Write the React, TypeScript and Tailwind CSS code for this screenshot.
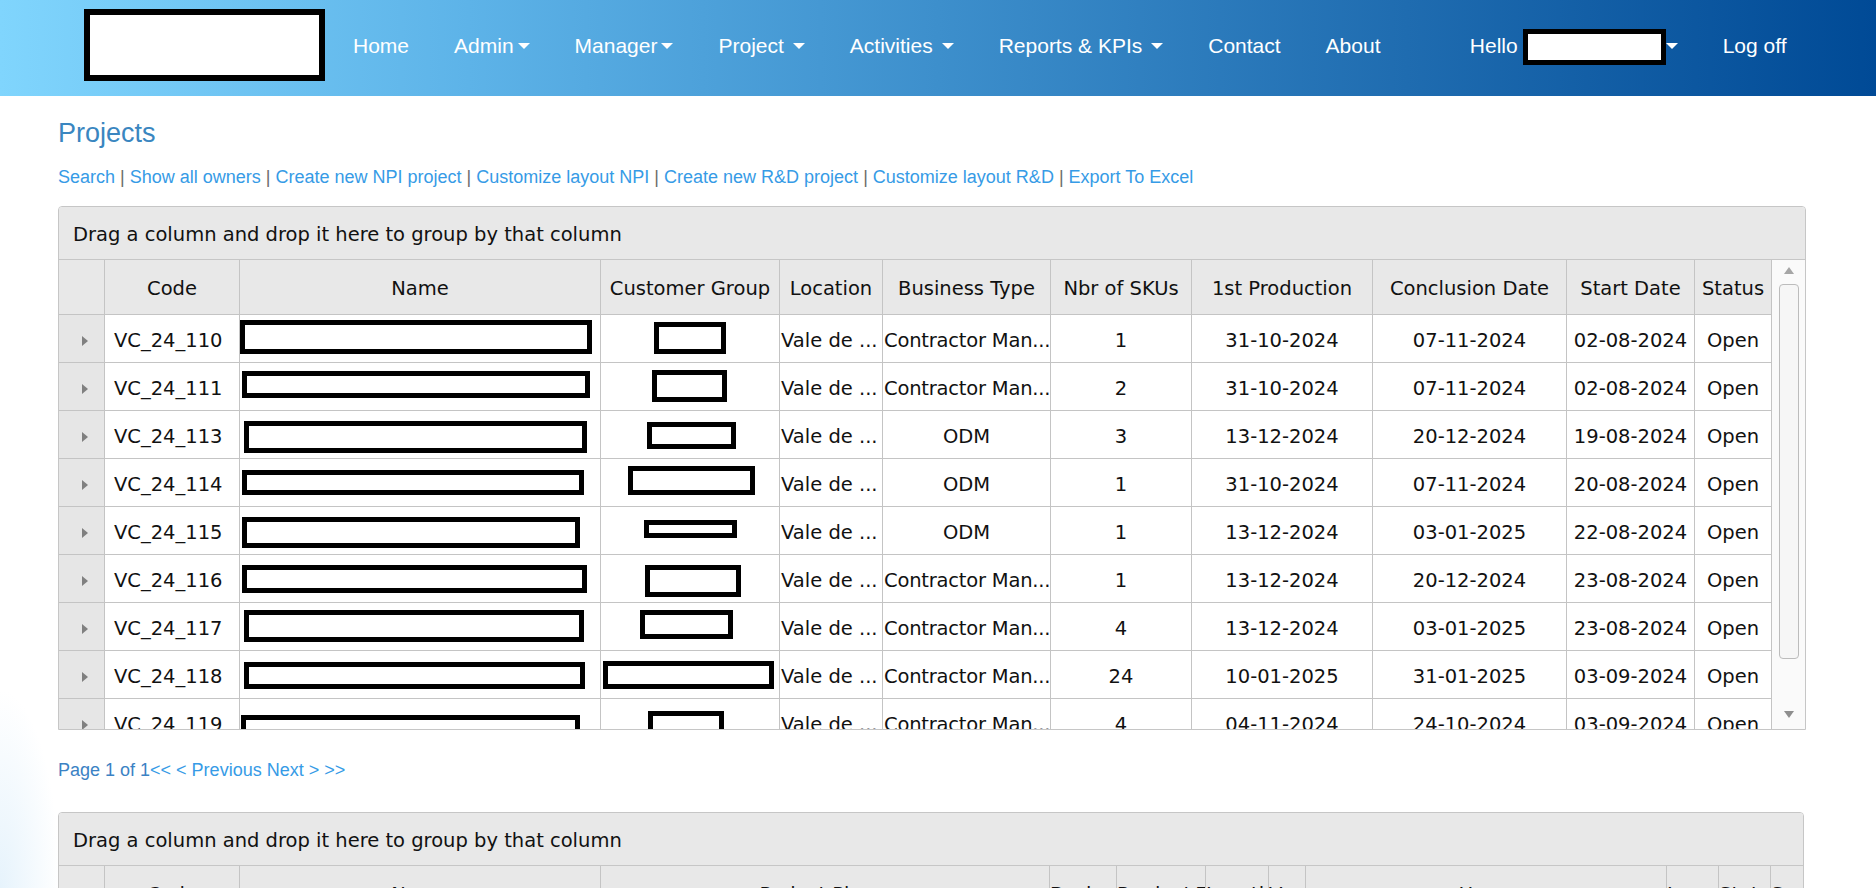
import React from "react";

type Box = { ml: number; mt: number; w: number; h: number };
type Row = {
  code: string;
  bt: "C" | "O";
  n: string;
  p: string;
  c: string;
  s: string;
  nb: Box;
  cb: Box;
};

const rows: Row[] = [
  { code: "VC_24_110", bt: "C", n: "1", p: "31-10-2024", c: "07-11-2024", s: "02-08-2024", nb: { ml: 0, mt: 5, w: 352, h: 34 }, cb: { ml: 53, mt: 7, w: 72, h: 32 } },
  { code: "VC_24_111", bt: "C", n: "2", p: "31-10-2024", c: "07-11-2024", s: "02-08-2024", nb: { ml: 2, mt: 8, w: 348, h: 27 }, cb: { ml: 51, mt: 7, w: 75, h: 32 } },
  { code: "VC_24_113", bt: "O", n: "3", p: "13-12-2024", c: "20-12-2024", s: "19-08-2024", nb: { ml: 4, mt: 10, w: 343, h: 32 }, cb: { ml: 46, mt: 11, w: 89, h: 27 } },
  { code: "VC_24_114", bt: "O", n: "1", p: "31-10-2024", c: "07-11-2024", s: "20-08-2024", nb: { ml: 2, mt: 11, w: 342, h: 25 }, cb: { ml: 27, mt: 7, w: 127, h: 29 } },
  { code: "VC_24_115", bt: "O", n: "1", p: "13-12-2024", c: "03-01-2025", s: "22-08-2024", nb: { ml: 2, mt: 10, w: 338, h: 31 }, cb: { ml: 43, mt: 13, w: 93, h: 18 } },
  { code: "VC_24_116", bt: "C", n: "1", p: "13-12-2024", c: "20-12-2024", s: "23-08-2024", nb: { ml: 2, mt: 10, w: 345, h: 28 }, cb: { ml: 44, mt: 10, w: 96, h: 32 } },
  { code: "VC_24_117", bt: "C", n: "4", p: "13-12-2024", c: "03-01-2025", s: "23-08-2024", nb: { ml: 4, mt: 7, w: 340, h: 32 }, cb: { ml: 39, mt: 7, w: 93, h: 29 } },
  { code: "VC_24_118", bt: "C", n: "24", p: "10-01-2025", c: "31-01-2025", s: "03-09-2024", nb: { ml: 4, mt: 11, w: 341, h: 27 }, cb: { ml: 2, mt: 10, w: 171, h: 28 } },
  { code: "VC_24_119", bt: "C", n: "4", p: "04-11-2024", c: "24-10-2024", s: "03-09-2024", nb: { ml: 1, mt: 16, w: 339, h: 30 }, cb: { ml: 47, mt: 12, w: 76, h: 30 } },
];

const heads1 = ["Code", "Name", "Customer Group", "Location", "Business Type", "Nbr of SKUs", "1st Production", "Conclusion Date", "Start Date", "Status"];
const heads2 = ["Code", "Name", "Project Phase", "Business Type", "Product Type", "Location", "Version", "Users", "Issues", "Status", "Sample"];

const links = [
  "Search",
  "Show all owners",
  "Create new NPI project",
  "Customize layout NPI",
  "Create new R&D project",
  "Customize layout R&D",
  "Export To Excel",
];

const cell = "h-[48px] border-r border-b border-[#c4c4c4] overflow-hidden whitespace-nowrap";
const txt = "flex items-center justify-center pt-[4px]";

function Caret({ gap }: { gap?: boolean }) {
  return (
    <span
      className={
        "inline-block w-0 h-0 border-t-[6px] border-x-[6px] border-x-transparent border-t-white align-middle " +
        (gap ? "ml-[9px]" : "ml-[4px]")
      }
    />
  );
}

function NavItem({ label, caret, gap }: { label: string; caret?: boolean; gap?: boolean }) {
  return (
    <li className="px-[22.5px] h-full flex items-center pb-[4px] whitespace-nowrap">
      <span>{label}</span>
      {caret && <Caret gap={gap} />}
    </li>
  );
}

function GroupPanel() {
  return (
    <div className="h-[53px] bg-[#e8e8e8] border-b border-[#c6c6c6] flex items-center pl-[14px] pt-[3px] text-[19.5px] text-[#111]">
      Drag a column and drop it here to group by that column
    </div>
  );
}

function Expander() {
  return (
    <div className={cell + " bg-[#e6e6e6] " + txt}>
      <span className="ml-[6px] w-0 h-0 border-l-[6px] border-l-[#808080] border-y-[5px] border-y-transparent" />
    </div>
  );
}

export default function App() {
  return (
    <div className="w-[1876px] min-h-screen bg-white font-['Liberation_Sans',Arial,sans-serif]">
      <nav className="h-[96px] bg-[linear-gradient(90deg,#80d5fd_0%,#5db3e8_25%,#3d8fcc_50%,#1f6cb0_75%,#004a96_100%)] flex pl-[84px] pr-[67px] text-white text-[21px]">
        <div className="mt-[9px] w-[241px] h-[72px] border-[6px] border-black bg-white shrink-0" />
        <ul className="ml-[5.5px] flex h-full">
          <NavItem label="Home" />
          <NavItem label="Admin" caret />
          <NavItem label="Manager" caret />
          <NavItem label="Project" caret gap />
          <NavItem label="Activities" caret gap />
          <NavItem label="Reports & KPIs" caret gap />
          <NavItem label="Contact" />
          <NavItem label="About" />
        </ul>
        <div className="flex-1" />
        <ul className="flex h-full">
          <li className="px-[22.5px] h-full flex items-center pb-[4px] whitespace-nowrap">
            <span>Hello</span>
            <span className="ml-[5px] mt-[2px] w-[143px] h-[36px] border-[5px] border-black bg-white" />
            <span className="inline-block w-0 h-0 border-t-[6px] border-x-[6px] border-x-transparent border-t-white" />
          </li>
          <li className="px-[22.5px] h-full flex items-center pb-[4px] whitespace-nowrap">Log off</li>
        </ul>
      </nav>

      <main className="px-[58px] pb-[40px] bg-[radial-gradient(ellipse_60px_200px_at_0px_770px,#e6f3fc,rgba(255,255,255,0))]">
        <h1 className="mt-[24px] text-[27px] leading-[27px] font-normal text-[#3a86c0]">Projects</h1>
        <div className="mt-[20px] text-[18px] leading-[20px] whitespace-nowrap">
          {links.map((l, i) => (
            <React.Fragment key={l}>
              {i > 0 && <span className="text-[#6b6b6b]"> | </span>}
              <span className="text-[#369be6]">{l}</span>
            </React.Fragment>
          ))}
        </div>

        {/* Grid 1 */}
        <div className="mt-[19px] w-[1748px] border border-[#c6c6c6] rounded-t-[4px] overflow-hidden font-['DejaVu_Sans',Verdana,sans-serif] text-[19.5px] text-[#111]">
          <GroupPanel />
          <div className="flex">
            <div className="w-[1713px]">
              <div className="grid grid-cols-[46px_135px_361px_179px_103px_168px_141px_181px_194px_128px_77px] bg-[#e8e8e8]">
                <div className="h-[55px] border-r border-b border-[#c4c4c4]" />
                {heads1.map((h) => (
                  <div key={h} className={"h-[55px] border-r border-b border-[#c4c4c4] overflow-hidden whitespace-nowrap " + txt}>
                    {h}
                  </div>
                ))}
              </div>
              <div className="h-[414px] overflow-hidden">
                {rows.map((r) => (
                  <div key={r.code} className="grid grid-cols-[46px_135px_361px_179px_103px_168px_141px_181px_194px_128px_77px]">
                    <Expander />
                    <div className={cell + " flex items-center pl-[9px] pt-[4px]"}>{r.code}</div>
                    <div className={cell}>
                      <div
                        className="border-[5px] border-black bg-white"
                        style={{ marginLeft: r.nb.ml, marginTop: r.nb.mt, width: r.nb.w, height: r.nb.h }}
                      />
                    </div>
                    <div className={cell}>
                      <div
                        className="border-[5px] border-black bg-white"
                        style={{ marginLeft: r.cb.ml, marginTop: r.cb.mt, width: r.cb.w, height: r.cb.h }}
                      />
                    </div>
                    <div className={cell + " flex items-center pl-[1px] pt-[4px]"}>Vale de ...</div>
                    {r.bt === "C" ? (
                      <div className={cell + " flex items-center pl-[1px] pt-[4px] tracking-[-0.2px]"}>Contractor Man...</div>
                    ) : (
                      <div className={cell + " " + txt}>ODM</div>
                    )}
                    <div className={cell + " " + txt}>{r.n}</div>
                    <div className={cell + " " + txt}>{r.p}</div>
                    <div className={cell + " " + txt}>{r.c}</div>
                    <div className={cell + " " + txt}>{r.s}</div>
                    <div className={cell + " " + txt}>Open</div>
                  </div>
                ))}
              </div>
            </div>
            <div className="w-[33px] h-[469px] bg-[#fafafa] flex flex-col items-center">
              <span className="mt-[7px] w-0 h-0 border-b-[7px] border-x-[5px] border-x-transparent border-b-[#a6a6a6]" />
              <div className="mt-[10px] w-[20px] h-[375px] rounded-[4px] border border-[#bcbcbc] bg-[#f6f6f6]" />
              <div className="flex-1" />
              <span className="mb-[11px] w-0 h-0 border-t-[7px] border-x-[5px] border-x-transparent border-t-[#8e8e8e]" />
            </div>
          </div>
        </div>

        <div className="mt-[30px] text-[18px] leading-[20px] whitespace-nowrap">
          <span className="text-[#3b82c4]">Page 1 of 1</span>
          <span className="text-[#369be6]">&lt;&lt; &lt; Previous Next &gt; &gt;&gt;</span>
        </div>

        {/* Grid 2 */}
        <div className="mt-[32px] w-[1746px] border border-[#c6c6c6] rounded-t-[4px] overflow-hidden font-['DejaVu_Sans',Verdana,sans-serif] text-[19.5px] text-[#111]">
          <GroupPanel />
          <div className="grid grid-cols-[46px_135px_361px_449px_67px_89px_63px_37px_361px_52px_52px_32px] bg-[#e8e8e8]">
            <div className="h-[55px] border-r border-b border-[#c4c4c4]" />
            {heads2.map((h, i) => (
              <div
                key={h}
                className={
                  "h-[55px] border-b border-[#c4c4c4] overflow-hidden whitespace-nowrap text-center pt-[4px] leading-[50px] " +
                  (i < heads2.length - 1 ? "border-r" : "")
                }
              >
                {h}
              </div>
            ))}
          </div>
          <div className="grid grid-cols-[46px_135px_361px_449px_67px_89px_63px_37px_361px_52px_52px_32px]">
            <Expander />
            <div className={cell + " flex items-center pl-[9px] pt-[4px]"}>VC_24_110</div>
            <div className={cell} />
            <div className={cell + " " + txt}>Development</div>
            <div className={cell} />
            <div className={cell} />
            <div className={cell} />
            <div className={cell} />
            <div className={cell} />
            <div className={cell} />
            <div className={cell} />
            <div className="h-[48px] border-b border-[#c4c4c4]" />
          </div>
        </div>
      </main>
    </div>
  );
}
